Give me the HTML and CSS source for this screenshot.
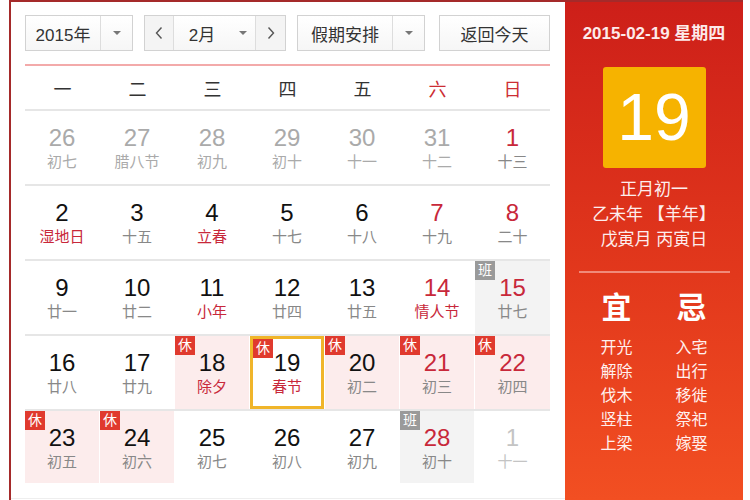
FILE: index.html
```html
<!DOCTYPE html>
<html lang="zh">
<head>
<meta charset="utf-8">
<link rel="stylesheet" href="styles.css">
</head>
<body>
<div class="frame">
  <div class="main">
    <div class="controls">
      <div class="sel sel-year"><span class="sel-text">2015年</span><span class="sel-arrow"><i class="tri"></i></span></div>
      <div class="sel sel-month">
        <span class="nav"><svg width="10" height="14" viewBox="0 0 10 14"><path d="M7.5 1.5 L2.5 7 L7.5 12.5" fill="none" stroke="#555" stroke-width="1.4"/></svg></span>
        <span class="sel-text mtext">2月</span><span class="marrow"><i class="tri"></i></span>
        <span class="nav navr"><svg width="10" height="14" viewBox="0 0 10 14"><path d="M2.5 1.5 L7.5 7 L2.5 12.5" fill="none" stroke="#555" stroke-width="1.4"/></svg></span>
      </div>
      <div class="sel sel-hol"><span class="sel-text">假期安排</span><span class="sel-arrow"><i class="tri"></i></span></div>
      <div class="btn">返回今天</div>
    </div>
    <div class="redline"></div>
    <div class="weekhead">
      <span>一</span><span>二</span><span>三</span><span>四</span><span>五</span><span class="red">六</span><span class="red">日</span>
    </div>
    <div class="grid">
      <div class="cell other"><b>26</b><em>初七</em></div>
      <div class="cell other"><b>27</b><em>腊八节</em></div>
      <div class="cell other"><b>28</b><em>初九</em></div>
      <div class="cell other"><b>29</b><em>初十</em></div>
      <div class="cell other"><b>30</b><em>十一</em></div>
      <div class="cell other"><b>31</b><em>十二</em></div>
      <div class="cell"><b class="rn">1</b><em>十三</em></div>
    </div>
    <div class="grid">
      <div class="cell"><b>2</b><em class="rl">湿地日</em></div>
      <div class="cell"><b>3</b><em>十五</em></div>
      <div class="cell"><b>4</b><em class="rl">立春</em></div>
      <div class="cell"><b>5</b><em>十七</em></div>
      <div class="cell"><b>6</b><em>十八</em></div>
      <div class="cell"><b class="rn">7</b><em>十九</em></div>
      <div class="cell"><b class="rn">8</b><em>二十</em></div>
    </div>
    <div class="grid">
      <div class="cell"><b>9</b><em>廿一</em></div>
      <div class="cell"><b>10</b><em>廿二</em></div>
      <div class="cell"><b>11</b><em class="rl">小年</em></div>
      <div class="cell"><b>12</b><em>廿四</em></div>
      <div class="cell"><b>13</b><em>廿五</em></div>
      <div class="cell"><b class="rn">14</b><em class="rl">情人节</em></div>
      <div class="cell work"><span class="badge gray">班</span><b class="rn">15</b><em>廿七</em></div>
    </div>
    <div class="grid">
      <div class="cell"><b>16</b><em>廿八</em></div>
      <div class="cell"><b>17</b><em>廿九</em></div>
      <div class="cell rest"><span class="badge">休</span><b>18</b><em class="rl">除夕</em></div>
      <div class="cell today"><span class="badge">休</span><b>19</b><em class="rl">春节</em></div>
      <div class="cell rest"><span class="badge">休</span><b>20</b><em>初二</em></div>
      <div class="cell rest"><span class="badge">休</span><b class="rn">21</b><em>初三</em></div>
      <div class="cell rest"><span class="badge">休</span><b class="rn">22</b><em>初四</em></div>
    </div>
    <div class="grid last">
      <div class="cell rest"><span class="badge">休</span><b>23</b><em>初五</em></div>
      <div class="cell rest"><span class="badge">休</span><b>24</b><em>初六</em></div>
      <div class="cell"><b>25</b><em>初七</em></div>
      <div class="cell"><b>26</b><em>初八</em></div>
      <div class="cell"><b>27</b><em>初九</em></div>
      <div class="cell work"><span class="badge gray">班</span><b class="rn">28</b><em>初十</em></div>
      <div class="cell other light"><b>1</b><em>十一</em></div>
    </div>
  </div>
  <div class="side">
    <div class="date">2015-02-19 星期四</div>
    <div class="bigday">19</div>
    <div class="lunar">
      <div>正月初一</div>
      <div>乙未年&nbsp;【羊年】</div>
      <div>戊寅月&nbsp;丙寅日</div>
    </div>
    <div class="divider"></div>
    <div class="yiji">
      <div class="col">
        <div class="head">宜</div>
        <div>开光</div><div>解除</div><div>伐木</div><div>竖柱</div><div>上梁</div>
      </div>
      <div class="col">
        <div class="head">忌</div>
        <div>入宅</div><div>出行</div><div>移徙</div><div>祭祀</div><div>嫁娶</div>
      </div>
    </div>
  </div>
</div>
</body>
</html>
```

FILE: styles.css
```css
* { box-sizing: border-box; }
html, body { margin: 0; padding: 0; }
body {
  width: 750px;
  height: 500px;
  overflow: hidden;
  background: #fff;
  font-family: "Liberation Sans", "Noto Sans CJK SC", sans-serif;
  color: #222;
}
.frame {
  margin-left: 9px;
  width: 734px;
  height: 500px;
  display: flex;
  border-left: 2px solid #a52a2a;
  border-top: 2px solid #a52a2a;
}
.main {
  width: 554px;
  padding: 13px 15px 0 14px;
  border-bottom: 1px solid #eee;
  height: 497px;
}
.controls {
  display: flex;
  height: 36px;
}
.sel, .btn {
  height: 36px;
  border: 1px solid #d2d2d2;
  background: linear-gradient(#fff, #f6f6f6);
  display: flex;
  align-items: center;
  font-size: 17px;
  color: #333;
}
.sel-year { width: 108px; }
.sel-month { width: 142px; margin-left: 11px; }
.sel-hol { width: 128px; margin-left: 11px; }
.btn { width: 111px; margin-left: 14px; justify-content: center; }
.sel-text { flex: 1; text-align: center; }
.sel-arrow {
  width: 32px;
  height: 100%;
  border-left: 1px solid #ddd;
  display: flex;
  align-items: center;
  justify-content: center;
}
.tri {
  display: block;
  width: 0;
  height: 0;
  border-left: 4px solid transparent;
  border-right: 4px solid transparent;
  border-top: 4px solid #777;
}
.nav {
  width: 29px;
  height: 100%;
  display: flex;
  align-items: center;
  justify-content: center;
  background: #f4f4f4;
  border-right: 1px solid #ddd;
}
.navr { border-right: none; border-left: 1px solid #ddd; width: 30px; }
.mtext { flex: none; width: 56px; text-align: center; }
.marrow { flex: 1; display: flex; justify-content: center; }
.redline {
  margin-top: 13px;
  height: 2px;
  background: #f3aaaa;
}
.weekhead {
  display: grid;
  grid-template-columns: repeat(7, 75px);
  height: 45px;
  align-items: center;
  text-align: center;
  font-size: 18px;
  color: #333;
  border-bottom: 2px solid #e6e6e6;
}
.red { color: #cc2d33; }
.grid {
  display: grid;
  grid-template-columns: repeat(7, 75px);
  height: 75px;
  border-bottom: 2px solid #e6e6e6;
}
.grid.last { border-bottom: none; height: 72px; }
.cell {
  position: relative;
  display: flex;
  flex-direction: column;
  align-items: center;
  padding-top: 14px;
  margin-right: 1px;
}
.cell:last-child { margin-right: 0; }
.cell b {
  font-weight: normal;
  font-size: 24px;
  line-height: 26px;
  color: #111;
}
.cell em {
  font-style: normal;
  font-size: 15px;
  line-height: 22px;
  color: #888;
}
.cell b.rn { color: #c8283a; }
.cell em.rl { color: #c8283a; }
.other b, .other em { color: #aaa; }
.light b, .light em { color: #c4c4c4; }
.rest { background: #fcecec; }
.work { background: #f3f3f3; }
.today { border: 3px solid #f0b52a; padding-top: 11px; }
.badge {
  position: absolute;
  left: 0;
  top: 0;
  width: 20px;
  height: 19px;
  background: #e03a2e;
  color: #fff;
  font-size: 14px;
  line-height: 19px;
  text-align: center;
}
.badge.gray { background: #9a9a9a; }
.side {
  width: 178px;
  height: 498px;
  background: linear-gradient(#cd1f19, #e2381c 55%, #f24f22);
  color: #fff;
  display: flex;
  flex-direction: column;
  align-items: center;
}
.date {
  margin-top: 20px;
  font-size: 17px;
  line-height: 24px;
  font-weight: bold;
  color: #fdeaea;
  white-space: nowrap;
}
.bigday {
  margin-top: 21px;
  width: 103px;
  height: 101px;
  background: #f6b300;
  border-radius: 3px;
  font-size: 66px;
  line-height: 101px;
  text-align: center;
  color: #fff;
}
.lunar {
  margin-top: 9px;
  font-size: 17px;
  line-height: 25px;
  text-align: center;
  color: #fdeeee;
}
.divider {
  margin-top: 19px;
  width: 151px;
  height: 2px;
  background: #f08a7a;
}
.yiji {
  display: flex;
  margin-top: 17px;
}
.col {
  width: 75px;
  text-align: center;
  font-size: 16px;
  line-height: 24px;
  color: #fff0ee;
}
.col .head {
  font-size: 30px;
  line-height: 36px;
  font-weight: bold;
  margin-bottom: 10px;
  color: #fff;
}
```
